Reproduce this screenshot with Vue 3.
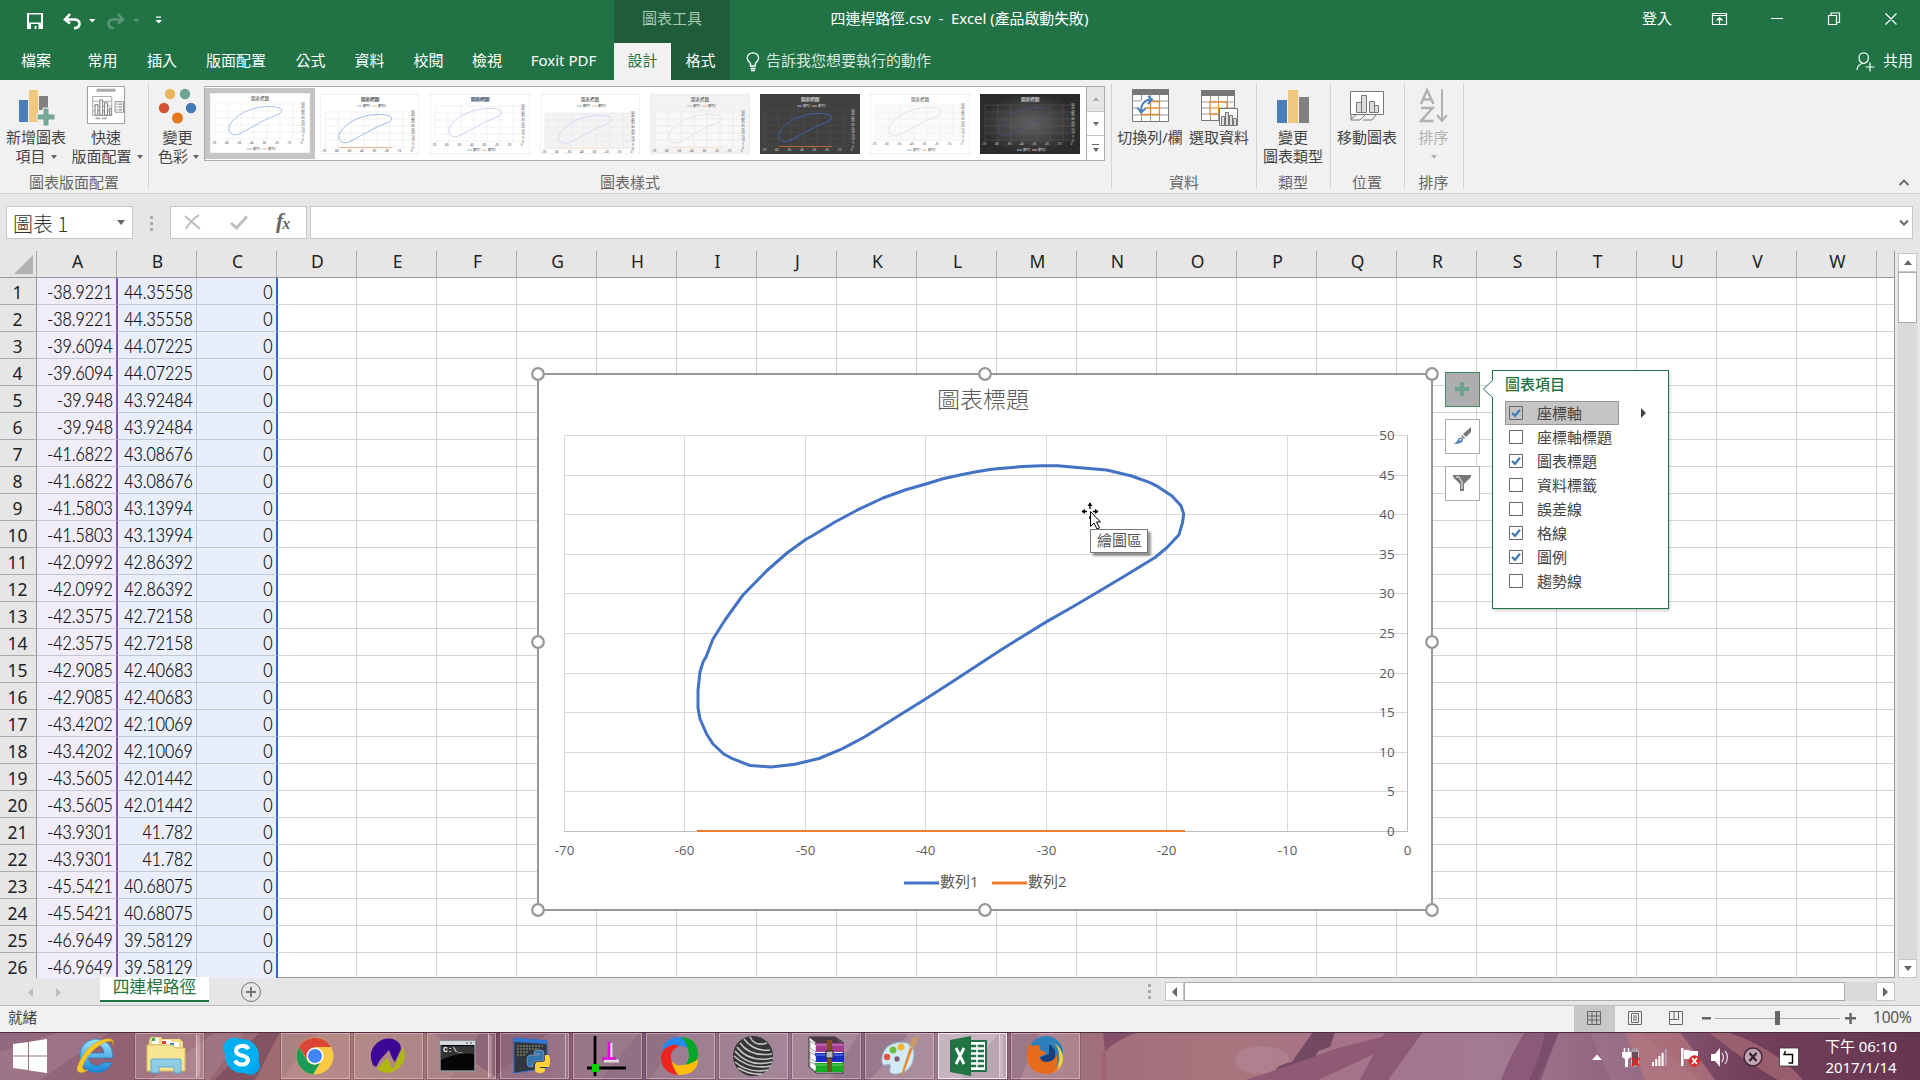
<script setup>
const tabs = [
  { t: '檔案', w: 72 }, { t: '常用', w: 61 }, { t: '插入', w: 58 }, { t: '版面配置', w: 90 },
  { t: '公式', w: 59 }, { t: '資料', w: 59 }, { t: '校閱', w: 59 }, { t: '檢視', w: 58 }, { t: 'Foxit PDF', w: 98 }
]
const columns = 'ABCDEFGHIJKLMNOPQRSTUVW'.split('')
const pairs = [
  ['-38.9221', '44.35558'], ['-39.6094', '44.07225'], ['-39.948', '43.92484'], ['-41.6822', '43.08676'],
  ['-41.5803', '43.13994'], ['-42.0992', '42.86392'], ['-42.3575', '42.72158'], ['-42.9085', '42.40683'],
  ['-43.4202', '42.10069'], ['-43.5605', '42.01442'], ['-43.9301', '41.782'], ['-45.5421', '40.68075'],
  ['-46.9649', '39.58129']
]
const rows = pairs.flatMap(p => [[p[0], p[1], '0'], [p[0], p[1], '0']])
const gx = [27.5, 147.5, 268.5, 388.5, 509.5, 629.5, 750.5, 870.5]
const gy = [62.5, 102.5, 141.5, 181.5, 220.5, 260.5, 300.5, 339.5, 379.5, 418.5, 458.5]
const xl = [-70, -60, -50, -40, -30, -20, -10, 0]
const yl = [50, 45, 40, 35, 30, 25, 20, 15, 10, 5, 0]
const curve = '990,469.5 975,472 960,475 943,478.7 926.7,483.7 905,490 883,498 857,510.2 835,522 812,536 806,539.3 787,553 767,570.5 743,595 725,620 713,639 706,657 703,662 700,672 698,690 698,708 700,719 706.6,734 713,744 723.7,754 732.5,758.700 750,765.5 771,767 795,764.200 819,758.500 842,748.800 864.5,737 895,718 925.5,699 955,680 984,661 1000,650.5 1046.7,621.600 1072,607.200 1097,592.500 1123,577 1155,557.5 1167,547.5 1179,534.7 1182.500,522.7 1183.7,514 1181,505.7 1172,496 1158,486.7 1150,482.7 1131.7,476 1106.7,470 1080,467.7 1058,465.7 1041,465.7 1023,466.5 997,468.7 990,469.5'
const handles = [[8, 8], [455, 8], [902, 8], [8, 276], [902, 276], [8, 544], [455, 544], [902, 544]]
const items = [
  ['座標軸', true], ['座標軸標題', false], ['圖表標題', true], ['資料標籤', false],
  ['誤差線', false], ['格線', true], ['圖例', true], ['趨勢線', false]
]
const thumbs = [
  { bg: '#fff', fg: '#444', grid: '#e6e6e6', line: '#a9bfe8', o: 0, legend: 'b', bar: false },
  { bg: '#fff', fg: '#333', grid: '#e2e2e2', line: '#a3b9e6', o: 7, legend: 't', bar: true, hl: '#aaa' },
  { bg: '#fff', fg: '#33425c', grid: '#e6e6ea', line: '#ccd8ef', o: 1, legend: 'b', bar: false, hl: '#5d6f92' },
  { bg: '#fff', fg: '#333', grid: '#e2e2e2', line: '#d2dcf0', o: 8, legend: 't', bar: true, faint: true, plot: '#f3f3f3' },
  { bg: '#f3f3f3', fg: '#444', grid: '#e2e2e2', line: '#dce5f4', o: 7, legend: 't', bar: true, faint: true, plot: '#f8f8f8' },
  { bg: '#404040', fg: '#ddd', grid: '#505050', line: '#3c62ac', o: 6, legend: 't', bar: true, hl: '#999' },
  { bg: '#fff', fg: '#555', grid: '#e8e8e8', line: '#e0e4ec', o: 0, legend: 'b', bar: false, plot: '#fafafa' },
  { bg: 'url(#darkglow)', fg: '#ddd', grid: '#5c5c5c', line: '#46526f', o: 0, legend: 'b', bar: false, hl: '#888' }
]
const tasks = [
  { k: 'explorer', stack: 2 }, { k: 'skype', plain: true }, { k: 'chrome' }, { k: 'mw' }, { k: 'cmd', stack: 2 },
  { k: 'python', stack: 1 }, { k: 'axis' }, { k: 'ring' }, { k: 'sphere' }, { k: 'rar' }, { k: 'paint' },
  { k: 'excel', stack: 2, active: true }, { k: 'firefox' }
]
</script>

<template>
  <div class="screen">
    <header class="top">
      <div class="titlebar">
        <svg class="qat" width="180" height="43" viewBox="0 0 180 43">
          <path d="M27 13h16v16H27z" fill="#fff" /><path d="M29 14.500h12v8H29zM31 24h7.500v5H36.500v-3h-1.800v3H31z" fill="#217346" />
          <path d="M70 14l-5 5.500 5 4M65.500 19.500h8.500q5.500 0 5.500 4.200t-5.500 4.600" fill="none" stroke="#fff" stroke-width="2.600" />
          <path d="M89 19h6.500l-3.250 3.500z" fill="#fff" />
          <g opacity=".25"><path d="M118 14l5 5.500-5 4M122.500 19.500H114q-5.500 0-5.500 4.200t5.500 4.600" fill="none" stroke="#fff" stroke-width="2.600" /><path d="M133 19h6.500l-3.250 3.500z" fill="#fff" /></g>
          <path d="M156 16.500h5v1.300h-5zM155.500 20h6.500l-3.250 3.500z" fill="#fff" />
        </svg>
        <div class="ctx">圖表工具</div>
        <div class="doc"><span>四連桿路徑.csv&nbsp; -&nbsp; Excel (產品啟動失敗)</span></div>
        <div class="login">登入</div>
        <svg width="220" height="43" viewBox="1700 0 220 43" fill="none" stroke="#fff" stroke-width="1.200">
          <path d="M1712.500 13.500h14v11h-14zM1712.500 15.500h14M1719.500 24v-6M1716.500 20.500l3-3 3 3M1771 18.500h12M1828.500 15.500h8v9h-8zM1831 15v-2h8.500v9.500h-2.500M1885.500 13.500l11 11M1896.500 13.500l-11 11" />
        </svg>
      </div>
      <nav class="tabs">
        <span v-for="x in tabs" :key="x.t" :style="{ width: x.w + 'px' }">{{ x.t }}</span>
        <span class="active">設計</span>
        <span class="dark">格式</span>
        <div class="tell">
          <svg width="14" height="20" viewBox="0 0 14 20" fill="none" stroke="#fff" stroke-width="1.300"><path d="M4.500 14v-2.500Q1.200 8.500 1.200 6a5.700 5.200 0 0 1 11.400 0q0 2.500-3.300 5.500V14zM4.500 16.500h5M5 18.500h4" /></svg>
          告訴我您想要執行的動作
        </div>
        <div class="share">
          <svg width="20" height="20" viewBox="0 0 20 20" fill="none" stroke="#fff" stroke-width="1.200"><path d="M1 18q.5-6 6-6.500h2M3 5.500a4.700 4.700 0 0 1 9.400 0q0 5-4.700 6-4.700-1-4.700-6M14 10.500v9M9.500 15h9" /></svg>
          共用
        </div>
      </nav>
    </header>

    <section class="ribbon">
      <div class="group" style="width:148px">
        <div class="tools">
          <div class="tool" style="width:72px">
            <svg width="40" height="40" viewBox="0 0 40 40"><path d="M3 14h9v22H3z" fill="#4a7eb8" /><path d="M13 4h9v32h-9z" fill="#edc87e" /><path d="M23 10h9v14h-9z" fill="#808080" /><path d="M27 22h6v6h6v6h-6v6h-6v-6h-6v-6h6z" fill="#76a797" stroke="#f1f1f1" /></svg>
            <b>新增圖表</b><b>項目<i /></b>
          </div>
          <div class="tool" style="width:68px">
            <svg width="42" height="42" viewBox="0 0 42 42"><path d="M1.500.500h39v39h-39z" fill="#fff" stroke="#999" /><path d="M11 3h20v3H11zM10 33h5v2h-5zM17 33h5v2h-5z" fill="#aaa" /><path d="M7 11h20v20H7zM7 16h20M7 21h20M7 26h20" fill="none" stroke="#aaa" /><path d="M9.500 19.500h3v11h-3zM14.500 14.500h3v16h-3zM19.500 17.500h3v13h-3zM24.500 23.500h2v7h-2z" fill="#fff" stroke="#777" /><path d="M30.500 16.500h9v11h-9z" fill="#fff" stroke="#888" /><path d="M32 19h1M34 19h4M32 22h1M34 22h4M32 25h1M34 25h4" stroke="#666" /></svg>
            <b>快速</b><b class="r4">版面配置<i /></b>
          </div>
        </div>
        <footer>圖表版面配置</footer>
      </div>
      <div class="group" style="width:962px">
        <div class="tools">
          <div class="tool colors" style="width:55px">
            <svg width="40" height="40" viewBox="0 0 40 40"><circle cx="12" cy="8" r="5.200" fill="#e9b55f" /><circle cx="27" cy="8" r="5.200" fill="#6ba592" /><circle cx="6" cy="22" r="5.200" fill="#d4522f" /><circle cx="33" cy="22" r="5.200" fill="#4579b7" /><circle cx="19.500" cy="32" r="5.500" fill="#e4761b" /></svg>
            <b>變更</b><b class="r4">色彩<i /></b>
          </div>
          <div class="gallery">
            <div v-for="(s, i) in thumbs" :key="i" class="cell" :class="{ sel: i === 0 }">
              <svg width="100" height="60" viewBox="0 0 100 60">
                <defs><radialGradient id="darkglow"><stop offset="0" stop-color="#626262" /><stop offset="1" stop-color="#2b2b2b" /></radialGradient></defs>
                <rect width="100" height="60" :fill="s.bg" :stroke="i === 5 || i === 7 ? 'none' : '#e5e5e5'" />
                <rect v-if="s.plot" x="5" :y="11 + s.o" width="88" height="36" :fill="s.plot" />
                <rect v-if="s.hl" x="41" y="3" width="19" height="4" :fill="s.hl" opacity=".5" />
                <text x="50" y="7" text-anchor="middle" :fill="s.fg" font-size="4.500">圖表標題</text>
                <path :d="`M5 ${11 + s.o}h88M5 ${18 + s.o}h88M5 ${25 + s.o}h88M5 ${32 + s.o}h88M5 ${39 + s.o}h88M5 ${46 + s.o}h88M5 ${11 + s.o}v36M18 ${11 + s.o}v36M31 ${11 + s.o}v36M44 ${11 + s.o}v36M57 ${11 + s.o}v36M70 ${11 + s.o}v36M83 ${11 + s.o}v36`" :stroke="s.grid" stroke-width=".5" />
                <path :transform="`translate(0 ${s.o})`" d="M60 13.500C41 13 23 23 19 34c-1 7 5 10 12 6L55 27l14-6c7-5-1-7.500-9-7.500z" fill="none" :stroke="s.line" />
                <path v-if="s.bar" :d="`M19 ${46.500 + s.o}h53`" :stroke="i === 5 ? '#b66331' : s.faint ? '#f8e4d5' : '#edb68b'" />
                <g :fill="s.fg" font-size="3"><text v-for="n in 8" :key="n" :x="4 + n * 12.500 - 12.500" :y="51 + s.o" text-anchor="middle">{{ n < 8 ? n * 10 - 80 : 0 }}</text><text v-for="n in 11" :key="'y' + n" x="93" :y="8 + s.o + n * 3.600" text-anchor="middle">{{ 55 - n * 5 }}</text></g>
                <path :d="s.legend === 'b' ? 'M37 56h5' : 'M37 12h5'" stroke="#9cb8e2" /><path :d="s.legend === 'b' ? 'M52 56h5' : 'M52 12h5'" stroke="#edb890" />
                <text x="43" :y="s.legend === 'b' ? 57 : 13" font-size="3" :fill="s.fg">數列1</text><text x="58" :y="s.legend === 'b' ? 57 : 13" font-size="3" :fill="s.fg">數列2</text>
              </svg>
            </div>
            <div class="gscroll"><div class="dis"><u class="up" /></div><div><u /></div><div class="more"><u /></div></div>
          </div>
        </div>
        <footer>圖表樣式</footer>
      </div>
      <div class="group" style="width:144px">
        <div class="tools dt">
          <div class="tool" style="width:68px">
            <svg width="40" height="40" viewBox="0 0 40 40"><path d="M2.500 3.500h36v32h-36z" fill="#fff" stroke="#777" /><path d="M2 3h37v6H2z" fill="#777" /><path d="M3 15h35M3 22h35M3 29h35M11.500 9v26M20.500 9v26M29.500 9v26" stroke="#999" /><path d="M11.500 15.500h18v13h-18zM20.500 15v13M11.500 22h18" fill="#fff" stroke="#e08a37" stroke-width="1.300" /><path d="M11.500 25Q11 15 20 14" stroke="#fff" stroke-width="6" fill="none" /><path d="M11 26Q11 14 21 13.500M18 10l4 3.500-4 4.500M7.500 21.500l3.500 5 4.500-4" stroke="#4a7eb8" stroke-width="2" fill="none" /></svg>
            <b>切換列/欄</b>
          </div>
          <div class="tool" style="width:68px">
            <svg width="40" height="40" viewBox="0 0 40 40"><path d="M2.500 4.500h33v30h-33z" fill="#fff" stroke="#777" /><path d="M2 4h34v6H2z" fill="#777" /><path d="M3 16h33M3 22h33M3 28h33M11.500 10v24M19.500 10v24M28.500 10v24" stroke="#999" /><path d="M11 16h17v12H11z" fill="#fff" stroke="#e08a37" stroke-width="1.300" /><path d="M19.500 16v12M11 22h17" stroke="#e08a37" /><path d="M20.500 22.500h18v17h-18z" fill="#fff" stroke="#777" /><path d="M22.500 30.500h3v9h-3zM26.500 26.500h3v13h-3zM30.500 29.500h3v10h-3zM34.500 32.500h3v7h-3z" fill="#ddd" stroke="#777" /></svg>
            <b>選取資料</b>
          </div>
        </div>
        <footer>資料</footer>
      </div>
      <div class="group" style="width:74px">
        <div class="tools"><div class="tool">
          <svg width="40" height="40" viewBox="0 0 40 40"><path d="M4 14h10v23H4z" fill="#4a7eb8" /><path d="M15 4h10v33H15z" fill="#edc87e" /><path d="M26 11h10v26H26z" fill="#808080" /></svg>
          <b>變更</b><b>圖表類型</b>
        </div></div>
        <footer>類型</footer>
      </div>
      <div class="group" style="width:74px">
        <div class="tools"><div class="tool">
          <svg width="40" height="40" viewBox="0 0 40 40" stroke="#777"><path d="M3.500 5.500h33v23h-33z" fill="#fff" /><path d="M9.500 16.500h5v10h-5zM14.500 9.500h5v17h-5zM22.500 15.500h5v11h-5zM27.500 19.500h4v7h-4z" fill="#ddd" /><path d="M4 29v5h9l5-5M16 34h9l4-5M4 33l5-4" fill="none" /></svg>
          <b>移動圖表</b>
        </div></div>
        <footer>位置</footer>
      </div>
      <div class="group" style="width:59px">
        <div class="tools"><div class="tool off">
          <svg width="40" height="40" viewBox="0 0 40 40" fill="none" stroke="#b1b1b1"><path d="M7 18L13 4l6.500 14M9 13.500h8.500M7 22h11.500L7 35h12.500" stroke-width="2.400" /><path d="M28 3v32M23 29l5 6 5-6" stroke-width="2" /></svg>
          <b>排序</b><b><i class="solo" /></b>
        </div></div>
        <footer>排序</footer>
      </div>
      <svg class="fold" width="12" height="9" viewBox="0 0 12 9"><path d="M1.500 7L6 2.500 10.500 7" fill="none" stroke="#666" stroke-width="1.800" /></svg>
    </section>

    <section class="formula">
      <div class="name"><span>圖表 1</span><u /></div>
      <div class="grip"><s /><s /><s /></div>
      <div class="fx">
        <svg width="102" height="31" viewBox="0 0 102 31" fill="none"><path d="M14 9l15 13M28 8q-9 6-13 14" stroke="#bdbdbd" stroke-width="2" /><path d="M60 16l5.500 5L76 9.500" stroke="#bdbdbd" stroke-width="2.800" /></svg>
        <em>f<sub>x</sub></em>
      </div>
      <div class="input"><svg width="12" height="8" viewBox="0 0 12 8"><path d="M2 1.500l4 4 4-4" fill="none" stroke="#666" stroke-width="2" /></svg></div>
    </section>

    <section class="work">
      <div class="sheet">
        <div class="cols"><div class="corner"><svg width="19" height="19"><path d="M19 0v19H0z" fill="#b1b1b1" /></svg></div><div v-for="c in columns" :key="c" class="col">{{ c }}</div></div>
        <div v-for="(r, i) in rows" :key="i" class="row">
          <div class="num">{{ i + 1 }}</div>
          <div class="a"><span>{{ r[0] }}</span></div><div class="b"><span>{{ r[1] }}</span></div><div class="c"><span>{{ r[2] }}</span></div>
          <div v-for="n in 21" :key="n" class="e" />
        </div>

        <svg class="chart" width="912" height="554" viewBox="0 0 912 554">
          <rect x="8" y="8" width="894" height="536" fill="#fff" stroke="#979797" stroke-width="2" />
          <g transform="translate(7 7)">
            <path :d="gx.map(x => `M${x} 62v396`).join('') + gy.map(y => `M27 ${y}h844`).join('')" fill="none" stroke="#d9d9d9" />
            <path d="M870.500 62v397M27 458.500h844" stroke="#bfbfbf" />
          </g>
          <text x="453" y="42" class="ct">圖表標題</text>
          <text v-for="(v, i) in xl" :key="'x' + v" :x="gx[i] + 7" y="489" class="ax">{{ v }}</text>
          <text v-for="(v, i) in yl" :key="'y' + v" x="864.500" :y="gy[i] + 11" class="ay">{{ v }}</text>
          <polyline :points="curve" transform="translate(-530 -366)" fill="none" stroke="#4472c4" stroke-width="3" stroke-linejoin="round" />
          <path d="M167 465h488" stroke="#ed7d31" stroke-width="2.200" />
          <path d="M374 517h35" stroke="#4472c4" stroke-width="2.800" /><path d="M462 517h35" stroke="#ed7d31" stroke-width="2.800" />
          <text x="410" y="521" class="lg">數列1</text><text x="498" y="521" class="lg">數列2</text>
          <circle v-for="(h, i) in handles" :key="i" :cx="h[0]" :cy="h[1]" r="5.800" fill="#fff" stroke="#979797" stroke-width="2.200" />
        </svg>

        <div class="side">
          <div class="on"><svg width="16" height="16"><path d="M6 1h4v5h5v4h-5v5H6v-5H1V6h5z" fill="#6ba592" /></svg></div>
          <div><svg width="20" height="20" viewBox="0 0 20 20"><path d="M19 1v5l-5 5-3-3zM10 9l3 3-1 1-3-3z" fill="#777" /><path d="M1 18q4-1 5-5 3-3 5 0 1 5-10 5z" fill="#4a7eb8" /><path d="M7.500 13q2-1 2 1l-2 1z" fill="#fff" /></svg></div>
          <div><svg width="18" height="18" viewBox="0 0 18 18"><path d="M0 1h18v2l-7 7v7H7v-7L0 3z" fill="#777" /><path d="M3 3h3l3 5v7" fill="none" stroke="#fff" /></svg></div>
        </div>

        <div class="panel">
          <svg class="notch" width="12" height="20" viewBox="0 0 12 20"><path d="M11 1L1.500 10 11 19" fill="#fff" stroke="#217346" /><path d="M11.500 1.500v17" stroke="#fff" stroke-width="2" /></svg>
          <h4>圖表項目</h4>
          <div v-for="(it, i) in items" :key="i" class="item">
            <label :class="{ hot: i === 0 }"><svg width="14" height="14" viewBox="0 0 14 14"><path d="M.500.500h13v13H.500z" :fill="i === 0 ? 'none' : '#fff'" stroke="#666" /><path v-if="it[1]" d="M3 7l3 2.800L11 3.800" fill="none" stroke="#4279b9" stroke-width="2.200" /></svg><span>{{ it[0] }}</span></label>
            <u v-if="i === 0" />
          </div>
        </div>

        <svg class="cursor" width="20" height="30" viewBox="0 0 20 30"><path d="M9 1v6M1 9.500h5M17 9.500h-5M9 14v3" stroke="#000" stroke-width="1.300" /><path d="M6.500 4L9 .500 11.500 4zM4 7L.500 9.500 4 12zM14 7l3.500 2.500L14 12z" /><path d="M9.500 9.500v15l3.500-3.500 3 6 2.500-1-3-6h4z" fill="#fff" stroke="#000" /></svg>
        <div class="tip">繪圖區</div>
      </div>
      <div class="vbar"><div class="btn"><u class="up" /></div><div class="thumb" /><div class="track" /><div class="btn"><u /></div></div>
    </section>

    <section class="sheets">
      <svg width="100" height="27"><path d="M33 10v9l-5-4.500zM56 10v9l5-4.500z" fill="#bcbcbc" /></svg>
      <div class="tab">四連桿路徑</div>
      <svg class="plus" width="22" height="22" viewBox="0 0 22 22" fill="none" stroke="#777"><circle cx="11" cy="11" r="9.500" /><path d="M11 6v10M6 11h10" stroke-width="2" /></svg>
      <div class="grip"><s /><s /><s /></div>
      <div class="hbar"><div class="btn"><u class="l" /></div><div class="thumb" /><div class="track" /><div class="btn"><u class="r" /></div></div>
    </section>

    <section class="status">
      <span class="ready">就緒</span>
      <div class="view act"><svg width="14" height="14" viewBox="0 0 14 14"><path d="M.500.500h13v13H.500zM.500 5h13M.500 9h13M5 .500v13M9.500.500v13" fill="none" stroke="#666" /></svg></div>
      <div class="view"><svg width="14" height="14" viewBox="0 0 14 14"><path d="M.500.500h13v13H.500zM3.500 2.500h7v9h-7zM5 5h4M5 7h4M5 9h4" fill="none" stroke="#666" /></svg></div>
      <div class="view"><svg width="14" height="14" viewBox="0 0 14 14"><path d="M.500.500h13v13H.500zM5 .500v8M9.500.500v8M.500 8.500h9" fill="none" stroke="#666" /></svg></div>
      <svg width="162" height="26" viewBox="1698 1006 162 26"><path d="M1715 1018.500h125" stroke="#ababab" /><path d="M1702 1017h9v2.500h-9zM1845 1017h11v2.500h-11zM1849.300 1013h2.500v11h-2.500zM1775 1011h5v14h-5z" fill="#666" /></svg>
      <span class="pct">100%</span>
    </section>

    <section class="taskbar">
      <svg class="wall" width="1920" height="48" preserveAspectRatio="none">
        <defs><linearGradient id="wall"><stop offset="0" stop-color="#91697f" /><stop offset=".08" stop-color="#925f70" /><stop offset=".16" stop-color="#a06f70" /><stop offset=".27" stop-color="#835a72" /><stop offset=".4" stop-color="#93738a" /><stop offset=".5" stop-color="#a08095" /><stop offset=".57" stop-color="#a06f7a" /><stop offset=".65" stop-color="#a8767e" /><stop offset=".7" stop-color="#a5738a" /><stop offset=".78" stop-color="#a27b93" /><stop offset=".86" stop-color="#8a5a78" /><stop offset=".91" stop-color="#72405b" /><stop offset="1" stop-color="#663650" /></linearGradient></defs>
        <path d="M0 0h1920v48H0z" fill="url(#wall)" />
        <path d="M0 48V20L60 0h50L40 48zM150 48L215 0h30l-35 48z" fill="#a98192" opacity=".5" /><path d="M260 0h20l-25 48h-40zM480 0h70l-60 48h-40z" fill="#6d4058" opacity=".55" />
        <path d="M280 48L320 0h110l70 48z" fill="#bd8f83" opacity=".4" /><path d="M600 48L640 0h40l-30 48zM860 0h50l-40 48h-40zM960 48l40-48h40l-20 48z" fill="#6f4968" opacity=".45" />
        <path d="M1103 0h35q-25 10-33 20z" fill="#85506a" /><path d="M1102 20h4v28h-4z" fill="#a05a66" opacity=".6" />
        <ellipse cx="1262" cy="28" rx="27" ry="14" fill="#b58999" opacity=".55" /><path d="M1313 0h22l-5 15-12 4-6 14-24 8-14-1q4-8 18-10z" fill="#734861" />
        <path d="M1245 48q50-16 90-31L1400 0h22l-34 15-50 24-20 9z" fill="#915a74" /><path d="M1385 0h38l-35 48h-28z" fill="#8c5a76" />
        <path d="M1525 0h34l-22 48h-36q8-22 24-48z" fill="#8a5a78" /><path d="M1545 0h14l-18 48h-12q12-24 16-48z" fill="#724362" opacity=".6" />
        <path d="M1590 0l20 48h90L1640 0z" fill="#a07890" opacity=".55" /><path d="M1625 0h55l35 48h-70z" fill="#b8797d" opacity=".7" /><path d="M1728 0q50 18 75 48h-25q-35-20-70-48z" fill="#a66a74" opacity=".75" />
        <path d="M0 .500h1920" stroke="#4c2b3d" />
      </svg>
      <div class="start"><svg width="34" height="34" viewBox="0 0 34 34" fill="#fff"><path d="M0 5l15-2v13.500H0zM16 2.800L34 0v16.500H16zM0 17.500h15V31L0 29zM16 17.500h18V34l-18-2.500z" /></svg></div>
      <div class="start ie"><svg width="40" height="40" viewBox="0 0 40 40"><defs><linearGradient id="ieb" x2="0" y2="1"><stop stop-color="#9be4ff" /><stop offset="1" stop-color="#1a84d6" /></linearGradient></defs><path d="M20.500 10a8.500 8.500 0 0 0-8 8h15.500q-1-8-7.500-8zM37 23H12.500q1 7 8 7.500 5 0 6.500-3h9q-4 10-16 10Q4 36 4 21T20 4q17 1 17 19z" fill="url(#ieb)" fill-rule="evenodd" stroke="#187ac0" stroke-width=".6" /><path d="M37 11q3-9-8-7Q14 8 6 22t-3 15q2 2 9-2-7 1-5-5 3-9 13-17t16-7q2 1 1 5z" fill="#f6c929" stroke="#d49b15" stroke-width=".5" /></svg></div>
      <div v-for="t in tasks" :key="t.k" class="task" :class="{ plain: t.plain, active: t.active, s1: t.stack === 1, s2: t.stack === 2 }">
        <div class="face">
          <svg width="40" height="42" viewBox="0 0 40 42">
            <g v-if="t.k === 'explorer'"><path d="M3 5l2-3h10l2 3v5H3z" fill="#ecd57a" /><path d="M6 3h7v6H6z" fill="#fff" /><path d="M6 3h3v3H6z" fill="#32a852" /><path d="M14 7l2-3h18l3 3v9H14z" fill="#f2dd86" /><path d="M16 5h9v5h-9z" fill="#fff" /><path d="M16 6h4v3h-4z" fill="#d64937" /><path d="M24 7h9v5h-9z" fill="#fff" /><path d="M24 8h4v3h-4z" fill="#287ed4" /><path d="M1 10h26l2 3h10v23H1z" fill="#f7e593" stroke="#dabd5e" /><path d="M5 38V26q0-2 2-2h26q2 0 2 2v12h-7v-6H13v6z" fill="#8accec" stroke="#5ba5cf" opacity=".95" /></g>
            <g v-else-if="t.k === 'skype'"><circle cx="12" cy="13" r="10.500" fill="#00aff0" /><circle cx="28" cy="30" r="10" fill="#00a4e4" /><circle cx="20" cy="21" r="17" fill="#00aff0" /><path d="M26.500 14Q24 10 19 11t-5 5q0 3 6 4.500t6 5q-1 4-6 4t-7-4" fill="none" stroke="#fff" stroke-width="4.200" /></g>
            <g v-else-if="t.k === 'chrome'"><circle cx="20" cy="21" r="18.500" fill="#fbc943" /><path d="M4 12A18.500 18.500 0 0 1 36 12H20l-7.500 13z" fill="#db4437" /><path d="M4 12l9 15q5 5 12 1l-7 11.500A18.500 18.500 0 0 1 4 12z" fill="#189c58" /><circle cx="20" cy="21" r="8.500" fill="#fff" /><circle cx="20" cy="21" r="7" fill="#4285f4" /></g>
            <g v-else-if="t.k === 'mw'"><path d="M5 30Q-1 17 9 8 18 1 27 5q6 3 6 9l-6 13q-3-3-6-12l-9 10-4 7z" fill="#3a0894" /><path d="M35 12q5 12-4 21-11 9-22 1l10-11q3 3 4 8l2 3z" fill="#b0b911" /></g>
            <g v-else-if="t.k === 'cmd'"><path d="M2 6h35v30H2z" fill="#050505" stroke="#8d969b" stroke-width="1.500" /><path d="M2 6h35v4H2z" fill="#d3dadd" /><path d="M28 8h2M32 8h2" stroke="#444" /><path d="M3 25q17-8 33-6v-8H3z" fill="#555" opacity=".6" /><text x="5" y="17" fill="#fff" font-size="8" font-weight="bold" font-family="Liberation Mono">C:\_</text></g>
            <g v-else-if="t.k === 'python'"><path d="M1 3l33 3v27L1 38z" fill="#303740" stroke="#2769bf" /><path d="M1 3l33 2v4L1 7z" fill="#2e74d1" /><path d="M4 11h26M4 14h22M4 17h12M4 20h9" stroke="#999b68" stroke-dasharray="2 1" /><path d="M21 17q0-2 5-2t5 2v7q0 2-3 2h-5q-3 0-3 3v3h-3q-3 0-3-6t3-6h9v-1h-5z" fill="#3776ab" stroke="#cde" stroke-width=".4" /><path d="M32 20h3q2 0 2 6t-2 6h-8v1h5v2q0 3-5 3t-5-3v-5q0-3 3-3h4q3 0 3-3z" fill="#ffd43b" /></g>
            <g v-else-if="t.k === 'axis'"><path d="M8 1v40M0 33h39" stroke="#000" stroke-width="2.800" /><path d="M5 29h7v8H5z" fill="#0bd200" /><path d="M24 8v15M17 26h15" stroke="#ddd" stroke-width="3" /><path d="M22 7v16M15 23.500h14" stroke="#e800df" stroke-width="2.500" /></g>
            <g v-else-if="t.k === 'ring'"><path d="M2 20Q2 3 19 2q10-1 14 10 0 3-1 5-5-7-13-6Q8 12 2 20z" fill="#2588f3" /><path d="M21 2q17 1 17 18-1 11-10 13-5 0-7-1 9-4 8-13Q28 9 21 2z" fill="#06a629" /><path d="M38 24q0 15-18 16-10-1-11-11 0-3 1-5 5 8 13 6 9-1 15-6z" fill="#fdbd09" /><path d="M18 40Q1 38 1 21q2-9 11-11 4-1 7 1-9 4-8 12 1 9 7 17z" fill="#ee251e" /></g>
            <g v-else-if="t.k === 'sphere'"><circle cx="20" cy="21" r="20" fill="#363636" /><path d="M7 8q10 14 32 11M4 12q12 16 36 11M2 16q14 17 37 11M1 21q15 14 37 10M2 27q14 12 33 8M5 33q12 7 24 6M11 4q10 13 26 11M17 2q5 10 17 6" stroke="#c4c4c4" stroke-width="1.600" fill="none" /></g>
            <g v-else-if="t.k === 'rar'"><path d="M3 2h26l8 5v31H10L3 32z" fill="#eee" stroke="#333" /><path d="M3 2h26l8 6H10z" fill="#4c3942" /><path d="M9 8h29v9H9z" fill="#a13c8f" /><path d="M9 18h29v9H9z" fill="#142fc6" /><path d="M9 28h29v9H9z" fill="#16ac24" /><path d="M10 10h27M10 20h27M10 30h27" stroke="#fff" opacity=".4" /><path d="M21 5h5v32h-5z" fill="#814c20" /><path d="M20 16h7v7h-7z" fill="#bbb" stroke="#222" /><path d="M4 6l6 4v7l-6-4zM4 17l6 4v6l-6-4zM4 27l6 3v6l-6-4z" fill="#fff" stroke="#555" stroke-width=".5" /></g>
            <g v-else-if="t.k === 'paint'"><path d="M3 22Q5 9 21 7q15 0 14 13-1 17-17 19-9 1-7-6 2-5-4-3-5 2-4-8z" fill="#d3ebf7" stroke="#8fb6cc" /><circle cx="8" cy="22" r="3.200" fill="#e45243" /><circle cx="14" cy="15" r="3.500" fill="#6ebd3c" /><circle cx="22" cy="12" r="3.500" fill="#f6b72d" /><circle cx="18" cy="24" r="2.700" fill="#865f75" /><path d="M22 40l9-28 3 1-10 27z" fill="#e78931" /><path d="M30 11l3-8 7-2-4 11z" fill="#c9986a" /></g>
            <g v-else-if="t.k === 'excel'"><path d="M20 6h17v30H20z" fill="#fff" stroke="#217346" stroke-width="2" /><path d="M22 11h13M22 16h13M22 21h13M22 26h13M22 31h13" stroke="#217346" stroke-width="2.500" /><path d="M28 8v26" stroke="#fff" stroke-width="1.500" /><path d="M1 5l21-4v40L1 37z" fill="#217346" /><path d="M7 13l8 16M15 13L7 29" stroke="#fff" stroke-width="2.800" /></g>
            <g v-else><circle cx="21" cy="18" r="17" fill="#2d80bb" /><path d="M24 9q8 4 6 14-4 8-10 6l-6-6 10-4z" fill="#163f7c" /><path d="M28 7q13 9 9 22-4 8-10 9 9-9 7-18 0-8-6-13z" fill="#f9d23c" /><path d="M4 8q1 3 4 3 4-2 7 0-1 4 2 5l4 1q0 3-6 4 0 6 7 6 8-1 10-8 2 9-2 14 3-1 4-4 0 9-13 10Q4 38 2 23 2 14 4 8z" fill="#e66b1d" /></g>
          </svg>
        </div>
      </div>
      <div class="tray">
        <svg width="210" height="34" viewBox="1590 1040 210 34">
          <path d="M1592 1060l5-5.500 5 5.500z" fill="#fff" />
          <path d="M1624.500 1048v4M1628.500 1048v4" stroke="#fff" stroke-width="1.500" /><path d="M1622 1052h9v5l-3 2v8h-3v-8l-3-2z" fill="#fff" /><path d="M1631.500 1051h7v15h-7zM1633 1049h4v2h-4z" fill="#6f4a58" stroke="#bbb" /><path d="M1632 1058l7 8M1639 1058l-7 8" stroke="#e52421" stroke-width="2" />
          <path d="M1652 1062h2v4h-2zM1655.200 1059h2v7h-2zM1658.400 1056h2v10h-2zM1661.600 1053h2v13h-2z" fill="#fff" /><path d="M1664.800 1049h2v17h-2z" fill="#b79daa" />
          <path d="M1681 1048h2.500v18h-2.500zM1684 1050q3-1 7 1h7v8h-14z" fill="#fff" /><circle cx="1694.500" cy="1061" r="5.800" fill="#db2c2b" /><path d="M1692 1058l5 6M1697 1058l-5 6" stroke="#fff" stroke-width="1.800" />
          <path d="M1711 1054h4l5-6v19l-5-6h-4z" fill="#fff" /><path d="M1722 1053q3 4 0 9M1725 1051q5 6 0 13" fill="none" stroke="#ddd" stroke-width="1.200" />
          <circle cx="1753" cy="1057" r="9" fill="#bfa5b2" stroke="#4b2638" stroke-width="1.500" /><path d="M1749.500 1053l7 8M1756.500 1053l-7 8" stroke="#372030" stroke-width="2.200" />
          <path d="M1779.500 1048h19v18h-19z" fill="#fff" stroke="#333" stroke-width=".8" /><path d="M1785.500 1051l-1.500 3.500h8.500v8.500h-4" fill="none" stroke="#000" stroke-width="1.400" />
        </svg>
        <div class="clock"><div>下午 06:10</div><div>2017/1/14</div></div>
      </div>
    </section>
  </div>
</template>

<style>
html, body { margin: 0; background: #e6e6e6; overflow: hidden; }
</style>

<style scoped>
* { box-sizing: border-box; }
.screen { width: 1920px; height: 1080px; display: flex; flex-direction: column; overflow: hidden; font: 15px/20px "Noto Sans", "Noto Sans CJK TC", sans-serif; color: #444; background: #e6e6e6; }
svg { display: block; flex: none; }
u { display: block; width: 0; height: 0; border: 4px solid transparent; border-top: 5px solid #666; border-bottom: 0; }
u.up { border-top: 0; border-bottom: 5px solid #666; }
u.l, u.r { border: 5px solid transparent; border-left: 0; border-right: 5px solid #666; }
u.r { border-right: 0; border-left: 5px solid #666; }

.top { height: 80px; background: #217346; color: #fff; flex: none; }
.titlebar { height: 43px; display: flex; font-size: 14.9px; line-height: 36px; }
.ctx { width: 116px; margin-left: 434px; background: #1e5c3a; color: #a5c9ae; text-align: center; font-size: 15px; }
.doc { flex: none; width: 459px; text-align: center; white-space: nowrap; }
.login { width: 511px; padding-left: 453px; font-size: 15px; }
.tabs { height: 37px; display: flex; line-height: 34px; text-align: center; }
.tabs > span { font-size: 15px; white-space: nowrap; flex: none; }
.tabs > span:nth-child(9) { font-size: 15px; padding-right: 3px; }
.tabs .active { width: 57px; background: #f1f1f1; color: #217346; }
.tabs .dark { width: 59px; background: #1e5c3a; }
.tell { display: flex; margin-left: 16px; gap: 6px; color: #d9e9df; width: 1110px; }
.tell svg, .share svg { margin-top: 9px; }
.share { display: flex; gap: 7px; }

.ribbon { height: 114px; flex: none; background: #f1f1f1; border-bottom: 1px solid #d2d2d2; display: flex; }
.group { height: 109px; display: flex; flex-direction: column; position: relative; flex: none; }
.group::after { content: ""; position: absolute; right: -1px; top: 4px; width: 1px; height: 105px; background: #d2d2d2; }
.group:nth-child(n+2) { margin-left: 1px; }
.group:nth-child(n+4) { margin-left: 0; }
.tools { height: 91px; display: flex; padding-top: 6px; }
.dt { padding-left: 4px; }
.dt .tool { margin-right: 1px; }
.tool { flex: 1 0 auto; display: flex; flex-direction: column; align-items: center; white-space: nowrap; }
.tool[style] { flex: none; }
.colors { padding-left: 2px; }
.tool svg { height: 40px; margin-bottom: 1px; }
.tool b { font-weight: 400; height: 19px; line-height: 20px; display: flex; align-items: center; }
.tool i { width: 0; height: 0; border: 3.5px solid transparent; border-top: 4px solid #666; border-bottom: 0; margin-left: 5px; margin-top: 3px; }
.tool .r4 { padding-left: 2px; }
.off { color: #b1b1b1; }
.off .solo { border-top-color: #b1b1b1; margin-left: 0; }
.group footer { text-align: center; color: #666; line-height: 23px; height: 18px; }
.gallery { display: flex; width: 901px; height: 75px; border: 1px solid #ababab; background: #fff; overflow: hidden; }
.cell { width: 110px; height: 71px; padding: 6px 5px 5px; flex: none; margin-top: 1px; }
.cell svg { background: #fff; }
.cell.sel { background: #c5c5c5; padding-top: 5px; }
.gscroll { margin-left: auto; width: 18px; display: flex; flex-direction: column; flex: none; border-left: 1px solid #ababab; }
.gscroll > div { flex: 1; display: flex; align-items: center; justify-content: center; border-bottom: 1px solid #c6c6c6; }
.gscroll u { border-width: 4px 3px 0; }
.gscroll u.up { border-width: 0 3px 4px; border-bottom-color: #aaa; }
.gscroll .dis { background: #e6e6e6; }
.gscroll .more { flex-direction: column; gap: 3px; border: 0; }
.gscroll .more::before { content: ""; width: 7px; height: 1px; background: #666; }
.fold { margin: 98px 10px 0 auto; }

.formula { height: 57px; padding: 12px 7px 0 6px; display: flex; flex: none; }
.name { width: 127px; height: 33px; background: #fff; border: 1px solid #c6c6c6; display: flex; align-items: center; justify-content: space-between; padding: 2px 7px 0 6px; font: 300 20px/24px "Noto Sans CJK TC", sans-serif; color: #333; }
.name u { margin-top: -3px; }
.grip { display: flex; flex-direction: column; gap: 3px; width: 3px; margin: 10px 18px 0 17px; flex: none; }
.grip s { width: 3px; height: 3px; background: #aaa; }
.fx { width: 137px; height: 33px; background: #fff; border: 1px solid #c6c6c6; display: flex; margin: 0 3px 0 -1px; }
.fx em { font: italic bold 22px/27px "Liberation Serif", serif; color: #666; padding-left: 3px; }
.fx sub { font-size: 16px; vertical-align: -1px; margin-left: -1px; }
.input { flex: 1; height: 33px; background: #fff; border: 1px solid #c6c6c6; display: flex; justify-content: flex-end; align-items: center; padding-right: 2px; }
.fx svg { width: 102px; }

.work { height: 727px; flex: none; display: flex; }
.sheet { width: 1895px; height: 727px; position: relative; background: #fff; border-right: 1px solid #999; border-bottom: 1px solid #999; display: flex; flex-direction: column; flex: none; }
.cols { height: 27px; display: flex; background: #e6e6e6; border-bottom: 1px solid #999; flex: none; font-size: 17.5px; color: #222; }
.corner { width: 37px; border-right: 1px solid #ababab; padding: 4px 0 0 14px; flex: none; }
.col { width: 80px; flex: none; text-align: center; line-height: 20px; padding-left: 2px; border-right: 1px solid #ababab; }
.row { height: 27px; display: flex; flex: none; overflow: hidden; }
.sheet .row:nth-child(27) { height: 25px; }
.row > div { width: 80px; height: 27px; flex: none; border-right: 1px solid #d4d4d4; border-bottom: 1px solid #d4d4d4; }
.row .num { width: 37px; background: #e6e6e6; text-align: center; font-size: 17.5px; line-height: 28px; border-color: #ababab; border-right-color: #999; color: #222; padding-right: 1px; }
.row .a, .row .b, .row .c { text-align: right; font: 300 20px/27px Lato, sans-serif; color: #000; padding-right: 3px; white-space: nowrap; display: flex; justify-content: flex-end; border-bottom-color: #c3c7d3; }
.row span { transform: scaleX(.8); transform-origin: right; -webkit-text-stroke: .2px #000; }
.row .a { background: #f1edf8; border-right: 2px solid #8256b8; width: 81px; }
.row .b { background: #e8effa; border-right-color: #c3c7d3; width: 79px; }
.row .c { background: #e8effa; border-right: 2px solid #2f69c5; width: 81px; }
.row .c + .e { width: 79px; }
.row .e:last-child { width: 17px; border-right: 0; }

.chart { position: absolute; left: 530px; top: 115px; }
.chart text { fill: #595959; font-family: "Open Sans", "Noto Sans CJK TC", sans-serif; }
.chart .ct { font-size: 23px; text-anchor: middle; font-weight: 300; }
.chart .ax { font-size: 13.3px; text-anchor: middle; }
.chart .ay { font-size: 13.3px; text-anchor: end; }
.chart .lg { font-size: 15px; }
.side { position: absolute; left: 1445px; top: 121px; display: flex; flex-direction: column; gap: 12px; }
.side div { width: 35px; height: 35px; border: 1px solid #ababab; background: #fff; display: flex; align-items: center; justify-content: center; padding: 0 1px 1px 0; }
.side .on { background: #aeaeae; border-color: #3f9163; }
.panel { position: absolute; left: 1492px; top: 119px; width: 177px; height: 239px; background: #fff; border: 1px solid #217346; box-shadow: 1px 2px 3px rgba(0,0,0,.18); padding: 3px 0 0 12px; }
.notch { position: absolute; left: -11px; top: 8px; }
.panel h4 { margin: 0 0 7px; font-size: 15px; line-height: 20px; font-weight: 500; color: #217346; }
.item { height: 24px; display: flex; align-items: center; }
.item label { width: 114px; height: 24px; padding-left: 3px; display: flex; align-items: center; gap: 14px; border: 1px solid transparent; white-space: nowrap; }
.item span { line-height: 22px; }
.item .hot { background: #c5c5c5; border-color: #979797; }
.item u { border: 5px solid transparent; border-right: 0; border-left: 5px solid #444; margin-left: 22px; }
.cursor { position: absolute; left: 1081px; top: 251px; }
.tip { position: absolute; left: 1090px; top: 278px; width: 58px; height: 24px; background: #fff; border: 1px solid #767676; box-shadow: 3px 3px 2px rgba(0,0,0,.4); line-height: 21px; padding-left: 6px; color: #575757; }

.vbar { width: 19px; margin: 2px 0 0 3px; display: flex; flex-direction: column; height: 725px; }
.btn { width: 19px; height: 19px; border: 1px solid #c6c6c6; background: #fff; display: flex; align-items: center; justify-content: center; flex: none; }
.vbar .thumb { height: 51px; border: 1px solid #ababab; background: #fff; }
.track { flex: 1; background: #dadada; }

.sheets { height: 28px; flex: none; border-bottom: 1px solid #bdbdbd; display: flex; }
.tab { width: 109px; height: 25px; margin-top: -1px; position: relative; background: #fff; border-bottom: 2px solid #217346; color: #217346; font-size: 16.7px; text-align: center; line-height: 19px; flex: none; }
.plus { margin: 3px 0 0 31px; }
.sheets .grip { margin: 6px 14px 0 886px; }
.hbar { width: 730px; display: flex; margin-top: 4px; height: 19px; }
.hbar .thumb { width: 661px; border: 1px solid #ababab; background: #fff; }

.status { height: 26px; flex: none; background: #f1f1f1; display: flex; line-height: 23px; }
.ready { width: 1574px; padding-left: 8px; font-size: 14.5px; }
.view { width: 41px; display: flex; justify-content: center; align-items: center; padding: 0 1px 3px 0; }
.act { background: #c8c8c8; }
.status > svg { margin-left: 1px; }
.pct { margin-left: 13px; font-size: 15.5px; color: #555; letter-spacing: -.2px; }

.taskbar { height: 48px; flex: none; position: relative; display: flex; }
.wall { position: absolute; inset: 0; }
.start { position: relative; padding: 7px 0 0 13px; width: 75px; }
.ie { width: 60px; padding: 3px 0 0 1px; }
.task { width: 69px; margin-right: 4px; height: 46px; margin-top: 1px; position: relative; border: 1px solid rgba(255,225,225,.42); box-shadow: 0 0 0 1px rgba(80,40,60,.25); background: rgba(225,205,200,.2); }
.face { height: 44px; display: flex; align-items: center; justify-content: center; padding-right: 2px; }
.s2 .face { width: 61px; padding-right: 0; border-right: 1px solid rgba(255,235,235,.6); box-shadow: 4px 0 0 -1px rgba(255,230,230,.28); }
.s1 .face { width: 65px; padding-right: 0; border-right: 1px solid rgba(255,235,235,.5); }
.plain { background: none; border-color: transparent; box-shadow: none; }
.task.active { background: rgba(255,255,255,.42); border-color: #eee; }
.tray { position: relative; display: flex; margin-left: 506px; }
.tray > svg { margin-top: 8px; }
.clock { color: #fff; font-size: 15px; line-height: 21px; text-align: center; padding-top: 4px; margin-left: 19px; width: 84px; white-space: nowrap; }
</style>
